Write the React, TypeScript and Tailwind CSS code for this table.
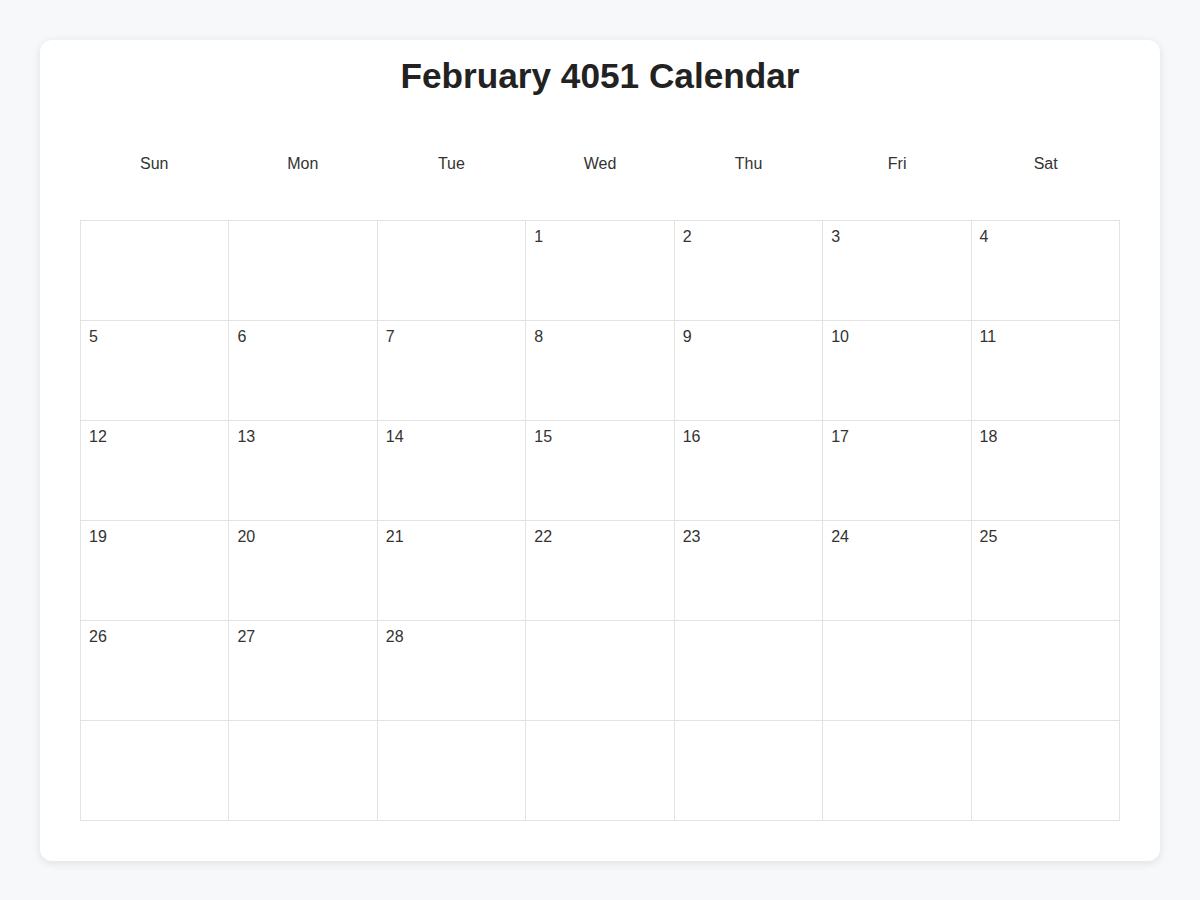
import React from 'react'

const days = ['Sun', 'Mon', 'Tue', 'Wed', 'Thu', 'Fri', 'Sat']

// February 4051 starts on a Wednesday, 28 days, 6 rows shown
function buildCells() {
  const cells: (number | null)[] = []
  for (let i = 0; i < 3; i++) cells.push(null)
  for (let d = 1; d <= 28; d++) cells.push(d)
  while (cells.length < 42) cells.push(null)
  return cells
}

function App() {
  const cells = buildCells()

  return (
    <div className="min-h-[900px] bg-[#f7f8fa] p-10 font-['Liberation_Sans',Arial,sans-serif]">
      <div className="rounded-xl bg-white px-10 pt-4 pb-10 shadow-[0_2px_10px_rgba(0,0,0,0.1)]">
        <h1 className="text-center text-[35.2px] leading-[40px] font-bold text-[#222]">
          February 4051 Calendar
        </h1>

        <div className="mt-[56px] grid grid-cols-7">
          {days.map((d) => (
            <div key={d} className="text-center text-base leading-6 text-[#333]">
              {d}
            </div>
          ))}
        </div>

        <div className="mt-[44px] grid grid-cols-7 border-t border-l border-[#e3e3e3]">
          {cells.map((n, i) => (
            <div key={i} className="h-[100px] border-r border-b border-[#e3e3e3] p-2">
              {n !== null && <span className="block text-base leading-4 text-[#333]">{n}</span>}
            </div>
          ))}
        </div>
      </div>
    </div>
  )
}

export default App
